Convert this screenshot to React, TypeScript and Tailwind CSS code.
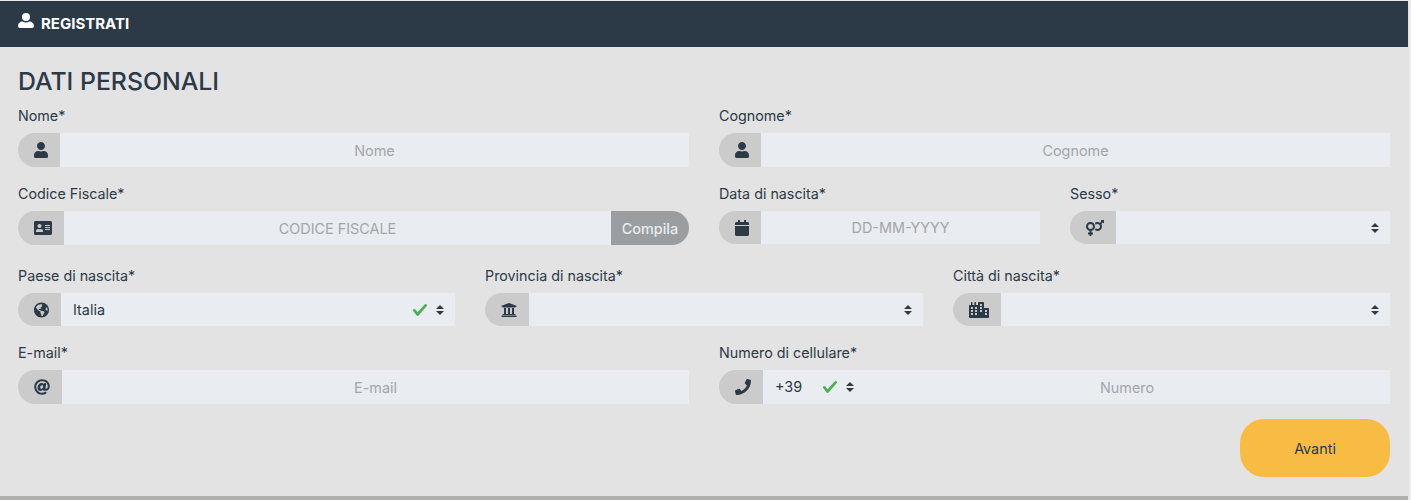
import React from 'react';
import { FaUser, FaAddressCard, FaCalendar, FaVenusMars, FaGlobeAmericas, FaUniversity, FaCity, FaAt, FaPhone } from 'react-icons/fa';

function Addon({ icon }: { icon: React.ReactNode }) {
  return (
    <div className="flex items-center shrink-0 pl-4 pr-3 bg-[#cbcbcb] rounded-l-[17px] text-[#2c3a47] text-base">
      {icon}
    </div>
  );
}

function Placeholder({ children }: { children: React.ReactNode }) {
  return <div className="flex-1 flex items-center justify-center pt-px bg-[#e9ecf1] text-[14.4px] text-[#a3a6a9]">{children}</div>;
}

function Arrows() {
  return (
    <svg viewBox="0 0 4 5" className="w-2 h-2.5 shrink-0 fill-[#343a40]">
      <path d="M2 0L0 2h4zm0 5L0 3h4z" />
    </svg>
  );
}

function Check({ className }: { className: string }) {
  return (
    <svg viewBox="0 0 8 8" className={`w-4 h-4 shrink-0 fill-[#4caf50] ${className}`}>
      <path d="M2.3 6.73L.6 4.53c-.4-1.04.46-1.4 1.1-.8l1.1 1.4 3.4-3.8c.6-.63 1.6-.27 1.2.7l-4 4.6c-.43.5-.8.4-1.1.1z" />
    </svg>
  );
}

function SelectBox({ value }: { value?: string }) {
  return (
    <div className="flex-1 flex items-center bg-[#e9ecf1] pl-3 pr-[11px] text-[14.4px] text-[#2c3a47]">
      <span className="flex-1">{value}</span>
      {value && <Check className="mr-2" />}
      <Arrows />
    </div>
  );
}

function Field({ label, className, tall = true, children }: { label: string; className: string; tall?: boolean; children: React.ReactNode }) {
  return (
    <div className={className}>
      <label className="block h-[21px] text-[14.3px] leading-[21px] text-[#2c3a47]">{label}*</label>
      <div className={`flex mt-[7px] ${tall ? 'h-[34px]' : 'h-[33px]'}`}>{children}</div>
    </div>
  );
}

export default function App() {
  return (
    <div className="h-[500px] overflow-hidden bg-[#ececec] pt-px font-['Inter',sans-serif]">
      <div className="w-[1408px] h-[495px] bg-[#e3e3e3] shadow-[0_4px_1px_#b0b0ae]">
        <div className="h-[46px] bg-[#2c3a47] flex items-center pl-[18px] text-white">
          <svg viewBox="0 0 16 15" className="w-4 h-[15px] -mt-[7px] mr-[7px] fill-white">
            <circle cx="8" cy="4" r="4" />
            <path d="M0 13c0-3 2.500-4.500 4.500-4.500 1 .6 2.200 1 3.500 1s2.500-.4 3.500-1c2 0 4.500 1.500 4.500 4.500 0 1.200-.8 2-2 2H2c-1.200 0-2-.8-2-2z" />
          </svg>
          <span className="text-[15px] font-bold">REGISTRATI</span>
        </div>
        <div className="px-[18px]">
          <h2 className="text-[24.8px] leading-[29px] font-medium text-[#2c3a47] mt-5">DATI PERSONALI</h2>

          <div className="flex gap-[30px] mt-[9px]">
            <Field label="Nome" className="w-[671px]">
              <Addon icon={<FaUser className="w-3.5" />} />
              <Placeholder>Nome</Placeholder>
            </Field>
            <Field label="Cognome" className="w-[671px]">
              <Addon icon={<FaUser className="w-3.5" />} />
              <Placeholder>Cognome</Placeholder>
            </Field>
          </div>

          <div className="flex gap-[30px] mt-4">
            <Field label="Codice Fiscale" className="w-[671px]">
              <Addon icon={<FaAddressCard className="w-[18px]" />} />
              <Placeholder>CODICE FISCALE</Placeholder>
              <div className="flex items-center justify-center pt-px w-[78px] bg-[#9a9ea1] rounded-r-[17px] text-[14.4px] font-medium text-[#e9ecef]">Compila</div>
            </Field>
            <Field label="Data di nascita" className="w-[321px]" tall={false}>
              <Addon icon={<FaCalendar className="w-3.5" />} />
              <Placeholder>DD-MM-YYYY</Placeholder>
            </Field>
            <Field label="Sesso" className="w-[320px]" tall={false}>
              <Addon icon={<FaVenusMars className="w-[18px]" />} />
              <SelectBox />
            </Field>
          </div>

          <div className="flex gap-[30px] mt-5">
            <Field label="Paese di nascita" className="w-[437px]" tall={false}>
              <Addon icon={<FaGlobeAmericas className="w-[15px]" />} />
              <SelectBox value="Italia" />
            </Field>
            <Field label="Provincia di nascita" className="w-[438px]" tall={false}>
              <Addon icon={<FaUniversity className="w-4" />} />
              <SelectBox />
            </Field>
            <Field label="Città di nascita" className="w-[437px]" tall={false}>
              <Addon icon={<FaCity className="w-5" />} />
              <SelectBox />
            </Field>
          </div>

          <div className="flex gap-[30px] mt-4">
            <Field label="E-mail" className="w-[671px]">
              <Addon icon={<FaAt className="w-4" />} />
              <Placeholder>E-mail</Placeholder>
            </Field>
            <Field label="Numero di cellulare" className="w-[671px]">
              <Addon icon={<FaPhone className="w-4" />} />
              <div className="flex items-center bg-[#e9ecf1] w-[101px] pl-3 text-[14.4px] text-[#2c3a47]">
                <span className="w-[47px]">+39</span>
                <Check className="mr-2" />
                <Arrows />
              </div>
              <Placeholder>Numero</Placeholder>
            </Field>
          </div>

          <div className="flex justify-end mt-[15px]">
            <button className="w-[150px] h-[58px] pt-px rounded-[24px] bg-[#f8bc44] text-[14.4px] text-[#2c3a47]">Avanti</button>
          </div>
        </div>
      </div>
    </div>
  );
}
